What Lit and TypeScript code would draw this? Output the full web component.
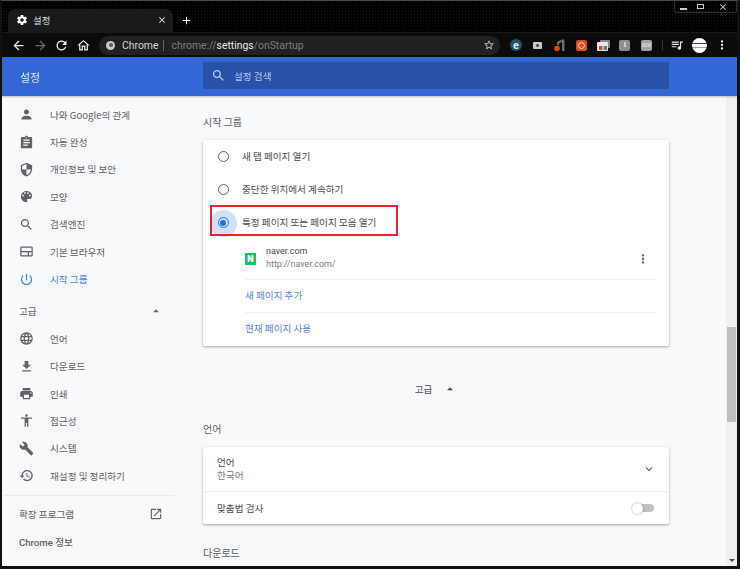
import { LitElement, html, css } from "lit";
import { customElement } from "lit/decorators.js";

const P: Record<string, string> = {
  person: "M12 12c2.21 0 4-1.79 4-4s-1.79-4-4-4-4 1.79-4 4 1.79 4 4 4zm0 2c-2.67 0-8 1.34-8 4v2h16v-2c0-2.66-5.33-4-8-4z",
  assignment: "M19 3h-4.18C14.4 1.84 13.3 1 12 1c-1.3 0-2.4.84-2.82 2H5c-1.1 0-2 .9-2 2v14c0 1.1.9 2 2 2h14c1.1 0 2-.9 2-2V5c0-1.1-.9-2-2-2zm-7 0c.55 0 1 .45 1 1s-.45 1-1 1-1-.45-1-1 .45-1 1-1zm2 14H7v-2h7v2zm3-4H7v-2h10v2zm0-4H7V7h10v2z",
  shield: "M12 1L3 5v6c0 5.55 3.84 10.74 9 12 5.16-1.26 9-6.45 9-12V5l-9-4zm0 10.99h7c-.53 4.12-3.28 7.79-7 8.94V12H5V6.3l7-3.11v8.8z",
  palette: "M12 3c-4.97 0-9 4.03-9 9s4.03 9 9 9c.83 0 1.5-.67 1.5-1.5 0-.39-.15-.74-.39-1.01-.23-.26-.38-.61-.38-.99 0-.83.67-1.5 1.5-1.5H16c2.76 0 5-2.24 5-5 0-4.42-4.03-8-9-8zm-5.5 9c-.83 0-1.5-.67-1.5-1.5S5.67 9 6.5 9 8 9.67 8 10.5 7.33 12 6.5 12zm3-4C8.67 8 8 7.33 8 6.5S8.67 5 9.5 5s1.5.67 1.5 1.5S10.33 8 9.5 8zm5 0c-.83 0-1.5-.67-1.5-1.5S13.67 5 14.5 5s1.5.67 1.5 1.5S15.33 8 14.5 8zm3 4c-.83 0-1.5-.67-1.5-1.5S16.67 9 17.5 9s1.5.67 1.5 1.5-.67 1.5-1.5 1.5z",
  search: "M15.5 14h-.79l-.28-.27C15.41 12.59 16 11.11 16 9.5 16 5.91 13.09 3 9.5 3S3 5.91 3 9.5 5.91 16 9.5 16c1.61 0 3.09-.59 4.23-1.57l.27.28v.79l5 4.99L20.49 19l-4.99-5zm-6 0C7.01 14 5 11.99 5 9.5S7.01 5 9.5 5 14 7.01 14 9.5 11.99 14 9.5 14z",
  web: "M20 4H4c-1.1 0-1.99.9-1.99 2L2 18c0 1.1.9 2 2 2h16c1.1 0 2-.9 2-2V6c0-1.1-.9-2-2-2zm0 14h-4v-5h4v5zm-6 0H4v-5h10v5zm6-7H4V6h16v5z",
  power: "M13 3h-2v10h2V3zm4.83 2.17l-1.42 1.42C17.99 7.86 19 9.81 19 12c0 3.87-3.13 7-7 7s-7-3.13-7-7c0-2.19 1.01-4.14 2.58-5.42L6.17 5.17C4.23 6.82 3 9.26 3 12c0 4.97 4.03 9 9 9s9-4.03 9-9c0-2.74-1.23-5.18-3.17-6.83z",
  language: "M11.99 2C6.47 2 2 6.48 2 12s4.47 10 9.99 10C17.52 22 22 17.52 22 12S17.52 2 11.99 2zm6.93 6h-2.95c-.32-1.25-.78-2.45-1.38-3.56 1.84.63 3.37 1.91 4.33 3.56zM12 4.04c.83 1.2 1.48 2.53 1.91 3.96h-3.82c.43-1.43 1.08-2.76 1.91-3.96zM4.26 14C4.1 13.36 4 12.69 4 12s.1-1.36.26-2h3.38c-.08.66-.14 1.32-.14 2 0 .68.06 1.34.14 2H4.26zm.82 2h2.95c.32 1.25.78 2.45 1.38 3.56-1.84-.63-3.37-1.9-4.33-3.56zm2.95-8H5.08c.96-1.66 2.49-2.93 4.33-3.56C8.81 5.55 8.35 6.75 8.03 8zM12 19.96c-.83-1.2-1.48-2.53-1.91-3.96h3.82c-.43 1.43-1.08 2.76-1.91 3.96zM14.34 14H9.66c-.09-.66-.16-1.32-.16-2 0-.68.07-1.35.16-2h4.68c.09.65.16 1.32.16 2 0 .68-.07 1.34-.16 2zm.25 5.56c.6-1.11 1.06-2.31 1.38-3.56h2.95c-.96 1.65-2.49 2.93-4.33 3.56zM16.36 14c.08-.66.14-1.32.14-2 0-.68-.06-1.34-.14-2h3.38c.16.64.26 1.31.26 2s-.1 1.36-.26 2h-3.38z",
  download: "M19 9h-4V3H9v6H5l7 7 7-7zM5 18v2h14v-2H5z",
  print: "M19 8H5c-1.66 0-3 1.34-3 3v6h4v4h12v-4h4v-6c0-1.66-1.34-3-3-3zm-3 11H8v-5h8v5zm3-7c-.55 0-1-.45-1-1s.45-1 1-1 1 .45 1 1-.45 1-1 1zm-1-9H6v4h12V3z",
  access: "M12 2c1.1 0 2 .9 2 2s-.9 2-2 2-2-.9-2-2 .9-2 2-2zm9 7h-6v13h-2v-6h-2v6H9V9H3V7h18v2z",
  build: "M22.7 19l-9.1-9.1c.9-2.3.4-5-1.5-6.9-2-2-5-2.4-7.4-1.3L9 6 6 9 1.6 4.7C.4 7.1.9 10.1 2.9 12.1c1.9 1.9 4.6 2.4 6.9 1.5l9.1 9.1c.4.4 1 .4 1.4 0l2.3-2.3c.5-.4.5-1.1.1-1.4z",
  restore: "M13 3c-4.97 0-9 4.03-9 9H1l3.89 3.89.07.14L9 12H6c0-3.87 3.13-7 7-7s7 3.13 7 7-3.13 7-7 7c-1.93 0-3.68-.79-4.94-2.06l-1.42 1.42C8.27 19.99 10.51 21 13 21c4.97 0 9-4.03 9-9s-4.03-9-9-9zm-1 5v5l4.28 2.54.72-1.21-3.5-2.08V8h-1.5z",
  open: "M19 19H5V5h7V3H5c-1.11 0-2 .9-2 2v14c0 1.1.89 2 2 2h14c1.1 0 2-.9 2-2v-7h-2v7zM14 3v2h3.59l-9.83 9.83 1.41 1.41L19 6.41V10h2V3h-7z",
  gear: "M19.43 12.98c.04-.32.07-.64.07-.98s-.03-.66-.07-.98l2.11-1.65c.19-.15.24-.42.12-.64l-2-3.46c-.12-.22-.39-.3-.61-.22l-2.49 1c-.52-.4-1.08-.73-1.69-.98l-.38-2.65C14.46 2.18 14.25 2 14 2h-4c-.25 0-.46.18-.49.42l-.38 2.65c-.61.25-1.17.59-1.69.98l-2.49-1c-.23-.09-.49 0-.61.22l-2 3.46c-.13.22-.07.49.12.64l2.11 1.65c-.04.32-.07.65-.07.98s.03.66.07.98l-2.11 1.65c-.19.15-.24.42-.12.64l2 3.46c.12.22.39.3.61.22l2.49-1c.52.4 1.08.73 1.69.98l.38 2.65c.03.24.24.42.49.42h4c.25 0 .46-.18.49-.42l.38-2.65c.61-.25 1.17-.59 1.69-.98l2.49 1c.23.09.49 0 .61-.22l2-3.46c.12-.22.07-.49-.12-.64l-2.11-1.65zM12 15.5c-1.93 0-3.5-1.57-3.5-3.5s1.57-3.5 3.5-3.5 3.5 1.57 3.5 3.5-1.57 3.5-3.5 3.5z",
  close: "M19 6.41L17.59 5 12 10.59 6.41 5 5 6.41 10.59 12 5 17.59 6.41 19 12 13.41 17.59 19 19 17.59 13.41 12z",
  plus: "M19 13h-6v6h-2v-6H5v-2h6V5h2v6h6v2z",
  back: "M20 11H7.83l5.59-5.59L12 4l-8 8 8 8 1.41-1.41L7.83 13H20v-2z",
  forward: "M12 4l-1.41 1.41L16.17 11H4v2h12.17l-5.58 5.59L12 20l8-8z",
  reload: "M17.65 6.35C16.2 4.9 14.21 4 12 4c-4.42 0-7.99 3.58-7.99 8s3.57 8 7.99 8c3.73 0 6.84-2.55 7.73-6h-2.08c-.82 2.33-3.04 4-5.65 4-3.31 0-6-2.69-6-6s2.69-6 6-6c1.66 0 3.14.69 4.22 1.78L13 11h7V4l-2.35 2.35z",
  home: "M12 5.69l5 4.5V18h-2v-6H9v6H7v-7.81l5-4.5M12 3L2 12h3v8h6v-6h2v6h6v-8h3L12 3z",
  star: "M22 9.24l-7.19-.62L12 2 9.19 8.63 2 9.24l5.46 4.73L5.82 21 12 17.27 18.18 21l-1.63-7.03L22 9.24zM12 15.4l-3.76 2.27 1-4.28-3.32-2.88 4.38-.38L12 6.1l1.71 4.04 4.38.38-3.32 2.88 1 4.28L12 15.4z",
  dots: "M12 8c1.1 0 2-.9 2-2s-.9-2-2-2-2 .9-2 2 .9 2 2 2zm0 2c-1.1 0-2 .9-2 2s.9 2 2 2 2-.9 2-2-.9-2-2-2zm0 6c-1.1 0-2 .9-2 2s.9 2 2 2 2-.9 2-2-.9-2-2-2z",
  chevron: "M16.59 8.59L12 13.17 7.41 8.59 6 10l6 6 6-6z",
  up: "M7 14l5-5 5 5z",
  playlist: "M15 6H3v2h12V6zm0 4H3v2h12v-2zM3 16h8v-2H3v2zM17 6v8.18c-.31-.11-.65-.18-1-.18-1.66 0-3 1.34-3 3s1.34 3 3 3 3-1.34 3-3V8h3V6h-5z",
};

const icon = (n: string, cls = "") =>
  html`<svg class="ic ${cls}" viewBox="0 0 24 24"><path d=${P[n]}></path></svg>`;

const NAV1 = [
  ["person", "나와 Google의 관계"],
  ["assignment", "자동 완성"],
  ["shield", "개인정보 및 보안"],
  ["palette", "모양"],
  ["search", "검색엔진"],
  ["web", "기본 브라우저"],
  ["power", "시작 그룹"],
];
const NAV2 = [
  ["language", "언어"],
  ["download", "다운로드"],
  ["print", "인쇄"],
  ["access", "접근성"],
  ["build", "시스템"],
  ["restore", "재설정 및 정리하기"],
];

@customElement("app-root")
export class AppRoot extends LitElement {
  static styles = css`
    :host {
      display: block;
      width: 740px;
      height: 569px;
      overflow: hidden;
      background: #000;
      font-family: "Noto Sans CJK KR", Roboto, sans-serif;
      font-size: 9.6px;
      color: #5f6368;
    }
    .win {
      height: 569px;
      box-sizing: border-box;
      display: flex;
      flex-direction: column;
      border-top: 1px solid #4a4a4a;
      border-left: 2px solid #111;
      border-right: 3px solid #111;
      border-bottom: 3px solid #111;
      background: #000;
      filter: blur(0.3px);
    }
    .ic { display: block; fill: currentColor; flex: none; width: 15px; height: 15px; }
    .strip {
      height: 31px;
      display: flex;
      align-items: flex-end;
      position: relative;
      padding-left: 6px;
      flex: none;
      background-image: radial-gradient(#141414 0.6px, transparent 0.7px);
      background-size: 3px 3px;
    }
    .tab {
      width: 165px;
      height: 23px;
      box-sizing: border-box;
      background: #181a1c;
      border-radius: 7px 7px 0 0;
      display: flex;
      align-items: center;
      padding: 0 6px 2px 8px;
      color: #e8eaed;
    }
    .tab .gear { width: 12px; height: 12px; color: #fff; }
    .tab span { flex: 1; margin-left: 5px; font-size: 9.4px; color: #dfe1e5; }
    .tab .x { width: 10px; height: 10px; color: #e8eaed; }
    .plus { width: 13px; height: 13px; color: #fff; margin: 0 0 5px 7px; }
    .winctl {
      position: absolute;
      right: 0;
      top: 0;
      width: 63px;
      height: 12px;
      border: 1px solid #2c2c2c;
      border-top: none;
      border-radius: 0 0 2px 2px;
      box-sizing: border-box;
      display: grid;
      grid-template-columns: 17px 17px 1fr;
      align-items: center;
      justify-items: center;
      color: #cfcfcf;
    }
    .min { width: 7px; height: 2px; background: #c8c8c8; margin-top: 4px; }
    .max { width: 7px; height: 5px; border: 1.5px solid #c8c8c8; box-sizing: border-box; }
    .winctl .ic { width: 10px; height: 10px; }
    .bar {
      height: 25px;
      flex: none;
      background: #0b0b0b;
      display: flex;
      align-items: center;
      color: #e8eaed;
      padding-left: 9px;
      border-top: 1px solid #1a1a1a;
      box-sizing: border-box;
    }
    .nb { width: 15px; height: 15px; margin-right: 6.5px; }
    .nb.dim { color: #6a6c70; }
    .omni {
      width: 401px;
      height: 19px;
      margin-left: 2px;
      border-radius: 10px;
      background: #1f2124;
      display: flex;
      align-items: center;
      font-family: Roboto, sans-serif;
      font-size: 10.4px;
      padding: 0 5px 0 7px;
      box-sizing: border-box;
      flex: none;
    }
    .fav {
      width: 9px;
      height: 9px;
      border-radius: 50%;
      background: #c7c9cc;
      box-sizing: border-box;
      margin-right: 7px;
      position: relative;
    }
    .fav::after {
      content: "";
      position: absolute;
      inset: 2.5px;
      border-radius: 50%;
      background: #5a5c60;
    }
    .chrome { color: #d5d7da; }
    .sep { width: 1px; height: 11px; background: #5f6368; margin: 0 7px 0 5px; }
    .url { color: #7b7f85; flex: 1; }
    .url b { color: #e8eaed; font-weight: 400; }
    .omni .star { width: 12px; height: 12px; color: #c8cacd; margin-right: 0; }
    .exts { display: flex; align-items: center; margin-left: 5px; }
    .slot { width: 21.8px; height: 15px; flex: none; display: flex; align-items: center; justify-content: center; }
    .slot svg { display: block; }
    .e { width: 11px; height: 11px; flex: none; border-radius: 2px; display: flex; align-items: center; justify-content: center; font: 700 9px/1 Roboto, sans-serif; color: #fff; }
    .e1 { width: 12px; height: 12px; background: #25506b; border-radius: 50%; font-size: 11px; color: #e4e8ea; }
    .e2 { width: 9px; height: 7px; background: #c9c9c9; border-radius: 1px; }
    .e2 i { display: block; width: 3px; height: 3px; background: #555; border-radius: 1px; }
    .e4 { background: #dc4a27; font-size: 8px; }
    .e4 i { display: block; width: 7px; height: 7px; border: 1.2px solid #f5d7cc; border-radius: 50%; box-sizing: border-box; }
    .e6 { background: #8f8f8f; font-size: 8px; color: #eee; }
    .e7 { background: #a2a2a2; font-size: 6px; color: #ddd; }
    .vsep { width: 1px; height: 11px; background: #333; margin: 0 7px 0 4px; flex: none; }
    .pl { width: 14px; height: 14px; color: #e8eaed; }
    .avatar { width: 15px; height: 15px; margin-left: 8.5px; border-radius: 50%; flex: none; background: linear-gradient(#fff 0 30%, #3b4470 30% 42%, #fff 42% 62%, #9ea3c0 62% 68%, #fff 68%); }
    .menu { width: 14px; height: 14px; color: #e8eaed; margin-left: 7.5px; }
    .head {
      height: 39px;
      flex: none;
      background: #3367d6;
      display: flex;
      align-items: center;
      box-shadow: 0 1px 2px rgba(0, 0, 0, 0.25);
      position: relative;
      z-index: 2;
    }
    .head h1 { margin: 0; width: 201px; padding-left: 18px; box-sizing: border-box; font-size: 11px; font-weight: 400; color: #dfe8fb; }
    .sb {
      width: 466px;
      height: 27px;
      margin-top: -3px;
      background: #2a51a8;
      border-radius: 1px;
      display: flex;
      align-items: center;
      padding-left: 8px;
      box-sizing: border-box;
      color: #bccdf0;
    }
    .sb .ic { width: 15px; height: 15px; margin-right: 8px; }
    .sb span { margin-top: 1px; }
    .body { flex: 1; min-height: 0; display: flex; background: #f8f9fa; }
    .side { width: 196px; flex: none; padding-top: 5px; box-sizing: border-box; }
    .row { height: 27.4px; display: flex; align-items: center; padding-left: 17px; }
    .row .ic { margin-right: 16px; color: #5f6368; }
    .row.on, .row.on .ic { color: #4285f4; }
    .gap { height: 5px; }
    .adv { justify-content: space-between; padding-right: 35px; }
    .adv .ic { margin: 0; width: 14px; height: 14px; color: #5f6368; }
    .hr { height: 1px; background: #ececee; margin: 6px 24px 4px 1px; }
    .ext { padding-left: 17px; justify-content: space-between; padding-right: 35px; }
    .ext .ic { margin: 0; width: 14px; height: 14px; }
    .strong { font-weight: 500; font-family: Roboto, "Noto Sans CJK KR", sans-serif; }
    .main { flex: 1; min-width: 0; padding-left: 5px; overflow: hidden; }
    .title { height: 16px; line-height: 16px; color: #5a5e63; font-size: 10px; }
    .t1 { margin-top: 18px; margin-bottom: 10px; }
    .card {
      width: 466px;
      background: #fff;
      border-radius: 2px;
      box-shadow: 0 1px 2px rgba(60, 64, 67, 0.3), 0 1px 3px 1px rgba(60, 64, 67, 0.1);
      position: relative;
      color: #4a4d52;
    }
    .radio { height: 33px; display: flex; align-items: center; padding-left: 14.5px; position: relative; }
    .radio span { position: relative; margin-top: -1px; }
    .dot { width: 11px; height: 11px; border: 1.5px solid #5f6368; border-radius: 50%; box-sizing: border-box; margin-right: 13.5px; position: relative; flex: none; z-index: 1; }
    .radio.sel .dot { border-color: #1a73e8; }
    .radio.sel .dot::after { content: ""; position: absolute; inset: 1.5px; border-radius: 50%; background: #1a73e8; }
    .radio.sel::before { content: ""; position: absolute; left: 6.5px; top: 3.5px; width: 27px; height: 27px; border-radius: 50%; background: #d0e1fb; }
    .mark { position: absolute; left: 7px; top: 65px; width: 188px; height: 31px; border: 2px solid #e5262b; box-sizing: border-box; }
    .pages { margin-left: 42px; margin-right: 13px; }
    .site { height: 40px; display: flex; align-items: center; border-bottom: 1px solid #eff0f1; }
    .nv { width: 11px; height: 12px; background: #0fc95f; color: #fff; font: 900 9px/12px Roboto, sans-serif; text-align: center; margin-right: 10px; flex: none; }
    .stx { flex: 1; font-family: Roboto, sans-serif; font-size: 9px; line-height: 13px; margin-top: -3px; }
    .stx div + div { color: #7a7d82; }
    .site .ic { width: 14px; height: 14px; color: #5f6368; margin-right: 6px; }
    .link { height: 32px; display: flex; align-items: center; color: #5b86dc; padding-bottom: 2px; box-sizing: border-box; }
    .link + .link { border-top: 1px solid #eff0f1; height: 34px; padding-bottom: 4px; }
    .mid { width: 466px; height: 34px; margin-top: 26px; display: flex; align-items: center; justify-content: center; color: #4a4d52; }
    .mid .ic { width: 14px; height: 14px; margin-left: 11px; }
    .t2 { margin-top: 15px; margin-bottom: 10px; }
    .t3 { margin-top: 21px; }
    .lr { height: 44px; display: flex; align-items: center; justify-content: space-between; padding: 0 14px; border-bottom: 1px solid #eff0f1; }
    .lr small { display: block; font-size: 9.6px; color: #7a7d82; margin-top: 0; }
    .lr div { line-height: 13px; }
    .lr .ic { width: 14px; height: 14px; color: #5f6368; margin-right: -1px; }
    .lr2 { height: 32px; display: flex; align-items: center; justify-content: space-between; padding: 0 15px 0 14px; }
    .tg { width: 22px; height: 11px; position: relative; }
    .tg::before { content: ""; position: absolute; right: 0; top: 1.5px; width: 18px; height: 8px; border-radius: 4px; background: #bdc1c6; }
    .tg::after { content: ""; position: absolute; left: 0; top: 0; width: 11px; height: 11px; border-radius: 50%; background: #fff; box-shadow: 0 0 2px rgba(0, 0, 0, 0.45); }
    .scroll { width: 11px; flex: none; background: #f0f0f0; display: flex; flex-direction: column; align-items: center; padding-top: 231px; box-sizing: border-box; }
    .thumb { width: 9px; height: 95px; background: #bfbfbf; }
    .arrow { margin-top: auto; width: 0; height: 0; border: 3px solid transparent; border-top: 3.5px solid #444; border-bottom: 0; margin-bottom: 4px; }
  `;

  render() {
    const row = (r: string[]) => html`<div class="row ${r[0] === "power" ? "on" : ""}">${icon(r[0])}<span>${r[1]}</span></div>`;
    return html`<div class="win">
      <div class="strip">
        <div class="tab">${icon("gear", "gear")}<span>설정</span>${icon("close", "x")}</div>
        ${icon("plus", "plus")}
        <div class="winctl"><i class="min"></i><i class="max"></i>${icon("close")}</div>
      </div>
      <div class="bar">
        ${icon("back", "nb")}${icon("forward", "nb dim")}${icon("reload", "nb")}${icon("home", "nb")}
        <div class="omni">
          <i class="fav"></i><span class="chrome">Chrome</span><i class="sep"></i>
          <span class="url">chrome://<b>settings</b>/onStartup</span>
          ${icon("star", "star")}
        </div>
        <div class="exts">
          <div class="slot"><i class="e e1">e</i></div>
          <div class="slot"><i class="e e2"><i></i></i></div>
          <div class="slot">
            <svg width="11" height="13" viewBox="0 0 11 13"><path d="M3 6V3l5-2.5h2.5V12H8V3L5 4.5V6z" fill="#6b6b6b"></path><circle cx="3" cy="9.5" r="2.8" fill="#e8420a"></circle></svg>
          </div>
          <div class="slot"><i class="e e4"><i></i></i></div>
          <div class="slot">
            <svg width="13" height="11" viewBox="0 0 13 11"><rect x="3" y="0" width="10" height="8" rx="1" fill="#8a8a8a"></rect><rect x="0" y="2" width="11" height="9" rx="1" fill="#e6e6e6"></rect><rect x="2" y="6" width="3" height="4" fill="#d84a3a"></rect><rect x="5" y="6" width="2" height="4" fill="#e8b93a"></rect><rect x="7" y="6" width="3" height="4" fill="#3d7de0"></rect></svg>
          </div>
          <div class="slot"><i class="e e6">I</i></div>
          <div class="slot"><i class="e e7">IDX</i></div>
          <i class="vsep"></i>${icon("playlist", "pl")}
          <div class="avatar"></div>
          ${icon("dots", "menu")}
        </div>
      </div>
      <div class="head">
        <h1>설정</h1>
        <div class="sb">${icon("search")}<span>설정 검색</span></div>
      </div>
      <div class="body">
        <nav class="side">
          ${NAV1.map(row)}
          <div class="gap"></div>
          <div class="row adv"><span>고급</span>${icon("up")}</div>
          ${NAV2.map(row)}
          <div class="hr"></div>
          <div class="row ext"><span>확장 프로그램</span>${icon("open")}</div>
          <div class="row ext"><span class="strong">Chrome 정보</span></div>
        </nav>
        <main class="main">
          <div class="title t1">시작 그룹</div>
          <div class="card">
            <div class="radio"><i class="dot"></i><span>새 탭 페이지 열기</span></div>
            <div class="radio"><i class="dot"></i><span>중단한 위치에서 계속하기</span></div>
            <div class="radio sel"><i class="dot"></i><span>특정 페이지 또는 페이지 모음 열기</span></div>
            <div class="pages">
              <div class="site">
                <i class="nv">N</i>
                <div class="stx"><div>naver.com</div><div>http://naver.com/</div></div>
                ${icon("dots")}
              </div>
              <div class="link">새 페이지 추가</div>
              <div class="link">현재 페이지 사용</div>
            </div>
            <div class="mark"></div>
          </div>
          <div class="mid"><span>고급</span>${icon("up")}</div>
          <div class="title t2">언어</div>
          <div class="card">
            <div class="lr"><div>언어<small>한국어</small></div>${icon("chevron")}</div>
            <div class="lr2"><span>맞춤법 검사</span><i class="tg"></i></div>
          </div>
          <div class="title t3">다운로드</div>
        </main>
        <div class="scroll"><div class="thumb"></div><i class="arrow"></i></div>
      </div>
    </div>`;
  }
}
